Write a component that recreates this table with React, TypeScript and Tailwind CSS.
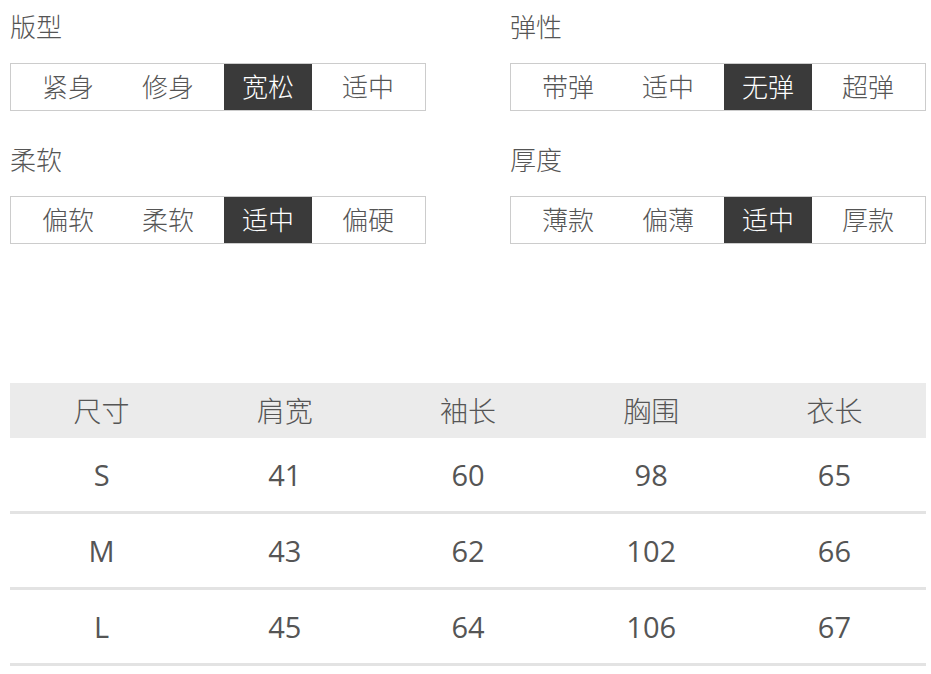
const groups = [
  { title: "版型", options: ["紧身", "修身", "宽松", "适中"], active: 2 },
  { title: "弹性", options: ["带弹", "适中", "无弹", "超弹"], active: 2 },
  { title: "柔软", options: ["偏软", "柔软", "适中", "偏硬"], active: 2 },
  { title: "厚度", options: ["薄款", "偏薄", "适中", "厚款"], active: 2 },
];

const headers = ["尺寸", "肩宽", "袖长", "胸围", "衣长"];
const rows = [
  ["S", "41", "60", "98", "65"],
  ["M", "43", "62", "102", "66"],
  ["L", "45", "64", "106", "67"],
];

function OptionGroup({ title, options, active }: { title: string; options: string[]; active: number }) {
  return (
    <div className="flex flex-col">
      <div className="h-[63px] pt-[11px] text-[26px] leading-[32px] text-[#555]">{title}</div>
      <div className="flex h-[48px] gap-[12px] border border-[#ccc] px-[13px]">
        {options.map((o, i) => (
          <div
            key={o}
            className={
              i === active
                ? "flex w-[88px] items-center justify-center bg-[#3a3a3a] text-[26px] text-white"
                : "flex w-[88px] items-center justify-center text-[26px] text-[#555]"
            }
          >
            {o}
          </div>
        ))}
      </div>
    </div>
  );
}

export default function App() {
  return (
    <div
      className="h-[674px] w-[931px] bg-white px-[10px] font-light"
      style={{ fontFamily: '"Open Sans", "Noto Sans CJK SC", sans-serif' }}
    >
      <div className="grid grid-cols-[416px_416px] gap-x-[84px] gap-y-[22px]">
        {groups.map((g) => (
          <OptionGroup key={g.title} {...g} />
        ))}
      </div>

      <div className="mt-[139px] w-[916px]">
        <div className="grid h-[55px] grid-cols-5 items-center bg-[#ebebeb] text-[28px] text-[#555]">
          {headers.map((h) => (
            <div key={h} className="text-center">
              {h}
            </div>
          ))}
        </div>
        {rows.map((r) => (
          <div
            key={r[0]}
            className="grid h-[76px] grid-cols-5 items-center border-b-[3px] border-[#e3e3e3] text-[29px] font-normal text-[#555]"
          >
            {r.map((c, i) => (
              <div key={i} className="text-center">
                {c}
              </div>
            ))}
          </div>
        ))}
      </div>
    </div>
  );
}
